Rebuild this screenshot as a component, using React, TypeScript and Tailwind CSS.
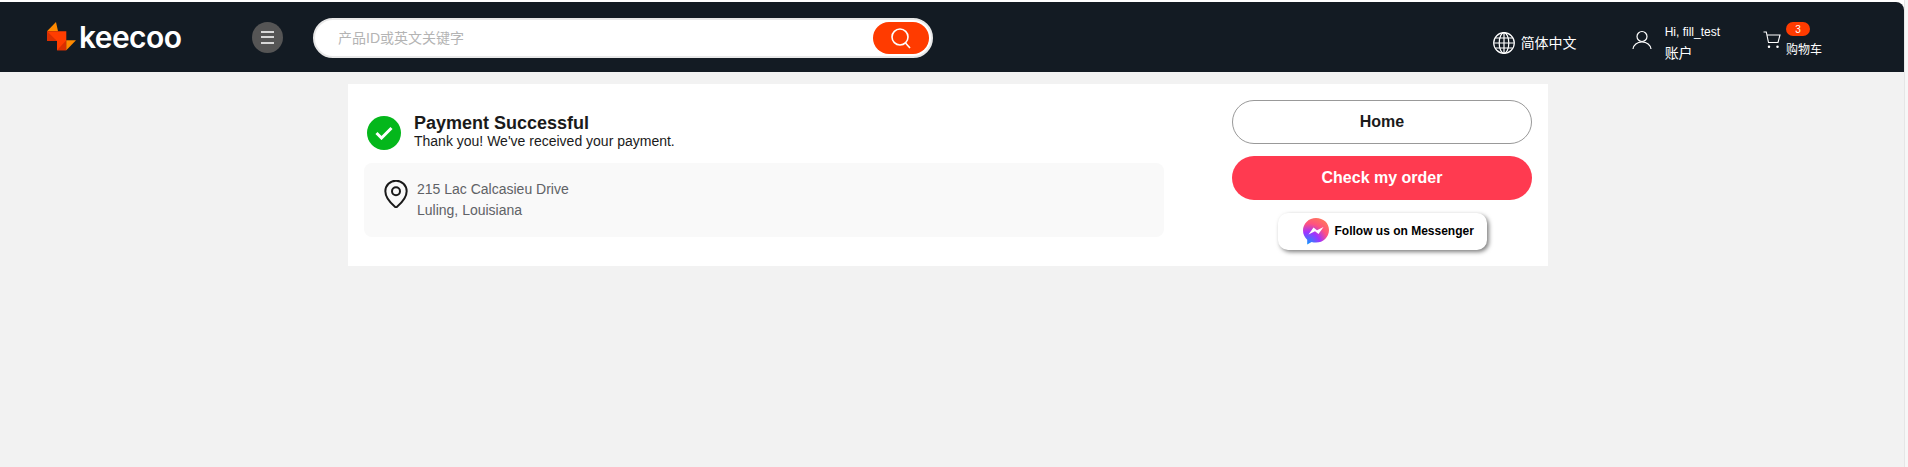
function Logo() {
  return (
    <div className="flex w-[135px] shrink-0 items-center">
      <svg width="30" height="30" viewBox="0 0 30 30" className="shrink-0">
        <polygon points="0,9.300 9,0 11,9.300" fill="#ff8a00" />
        <polygon points="0,9.300 19.300,9.300 19.300,28.300 10,28.300 10,19 0,19" fill="#ff3d00" />
        <polygon points="0,9.300 10,19 0,19" fill="#d92f00" />
        <polygon points="10,28.300 19.300,18.300 19.300,28.300" fill="#d92f00" />
        <polygon points="19.300,18.300 29,18.300 19.300,28.300" fill="#ff8a00" />
      </svg>
      <span className="ml-[2px] font-['Inter',sans-serif] text-[30px] font-semibold leading-none tracking-[-0.6px] text-white">
        keecoo
      </span>
    </div>
  );
}

function SearchIcon() {
  return (
    <svg width="22" height="22" viewBox="0 0 22 22" fill="none" stroke="#ffffff" strokeWidth="1.6">
      <circle cx="10" cy="10" r="8" />
      <path d="M15.500 16l4.500 5" />
    </svg>
  );
}

function SearchBar() {
  return (
    <div className="ml-[30px] mt-[2px] flex h-[40px] w-[620px] items-center justify-between rounded-full border-2 border-[#e8e8e8] bg-white pl-[23px] pr-[2px]">
      <span className="text-[14px] text-[#b4b4b4]">产品ID或英文关键字</span>
      <button className="flex h-[32px] w-[56px] items-center justify-center rounded-full bg-[#ff3b00]">
        <SearchIcon />
      </button>
    </div>
  );
}

function GlobeIcon() {
  return (
    <svg width="26" height="26" viewBox="0 0 26 26" fill="none" stroke="#ffffff" strokeWidth="1.2" className="shrink-0">
      <circle cx="13" cy="13" r="10.300" />
      <ellipse cx="13" cy="13" rx="4.800" ry="10.300" />
      <path d="M13 2.700v20.600M2.700 13h20.600M4.300 8h17.400M4.300 18h17.400" />
    </svg>
  );
}

function UserIcon() {
  return (
    <svg width="20" height="20" viewBox="0 0 20 20" fill="none" stroke="#ffffff" strokeWidth="1.2" className="mb-[6px] shrink-0">
      <circle cx="10" cy="6.500" r="5" />
      <path d="M1 19c.5-4 4-7 9-7s8.500 3 9 7" />
    </svg>
  );
}

function CartIcon() {
  return (
    <svg width="18" height="18" viewBox="0 0 18 18" fill="none" stroke="#ffffff" strokeWidth="1.100" className="mt-[9px] shrink-0">
      <path d="M0.500 1h2.800l2.200 10.500h9.500l2-7.500H4" />
      <circle cx="6" cy="15.800" r="0.700" fill="#ffffff" />
      <circle cx="14.500" cy="15.800" r="0.700" fill="#ffffff" />
    </svg>
  );
}

function Header() {
  return (
    <div className="bg-white pt-[2px]">
      <header className="flex h-[70px] items-center rounded-tr-[8px] bg-[#131b23] pl-[47px] text-white">
        <Logo />
        <button className="ml-[70px] flex h-[31px] w-[31px] flex-col items-center justify-center gap-[3.500px] rounded-full bg-[#555555]">
          <span className="h-[2px] w-[13px] bg-[#d8d8d8]" />
          <span className="h-[2px] w-[13px] bg-[#d8d8d8]" />
          <span className="h-[2px] w-[13px] bg-[#d8d8d8]" />
        </button>
        <SearchBar />

        <div className="ml-auto flex h-full items-start pr-[82px]">
          <div className="mt-[28px] flex items-center">
            <GlobeIcon />
            <span className="ml-[4px] text-[14px] leading-[26px]">简体中文</span>
          </div>

          <div className="ml-[55px] mt-[20px] flex items-center">
            <UserIcon />
            <div className="ml-[13px] leading-[21px]">
              <div className="text-[12px]">Hi, fill_test</div>
              <div className="text-[14px]">账户</div>
            </div>
          </div>

          <div className="ml-[43px] mt-[20px] flex items-start">
            <CartIcon />
            <div className="ml-[5px]">
              <div className="flex h-[14px] w-[24px] items-center justify-center rounded-full bg-[#ff3b00] text-[10px]">
                3
              </div>
              <div className="mt-[4px] text-[12px] leading-[20px]">购物车</div>
            </div>
          </div>
        </div>
      </header>
    </div>
  );
}

function MessengerIcon() {
  return (
    <svg width="26" height="27" viewBox="0 0 26 27" className="shrink-0">
      <defs>
        <radialGradient id="msg" cx="0.2" cy="1" r="1.05">
          <stop offset="0" stopColor="#0a99ff" />
          <stop offset="0.45" stopColor="#a033ff" />
          <stop offset="0.75" stopColor="#ff5280" />
          <stop offset="1" stopColor="#ff7061" />
        </radialGradient>
      </defs>
      <path
        d="M13 0C5.800 0 0 5.500 0 12.600c0 3.700 1.600 6.900 4.200 9.100v4.800l4.400-2.500c1.400.4 2.900.6 4.400.6 7.200 0 13-5.500 13-12.600S20.200 0 13 0z"
        fill="url(#msg)"
      />
      <path d="M5.500 16.500L10.500 9.500 14 12.300 20.500 9 15.500 16 12 13.200z" fill="#ffffff" />
    </svg>
  );
}

function PinIcon() {
  return (
    <svg width="24" height="28" viewBox="3 1.500 18 21" fill="none" stroke="#1a1a1a" strokeWidth="1.500" className="mt-[1px] shrink-0">
      <path d="M20 10c0 5-5.500 10.200-7.400 11.800a1 1 0 0 1-1.200 0C9.500 20.200 4 15 4 10a8 8 0 0 1 16 0z" />
      <circle cx="12" cy="10" r="3" />
    </svg>
  );
}

function CheckIcon() {
  return (
    <svg width="18" height="14" viewBox="0 0 18 14" fill="none" stroke="#ffffff" strokeWidth="3">
      <path d="M1.500 7l5 5L16.500 2" />
    </svg>
  );
}

export default function App() {
  return (
    <div className="flex h-[467px] overflow-hidden bg-[#f2f2f2] font-['Liberation_Sans','Noto_Sans_CJK_SC',sans-serif]">
      <div className="w-[1904px] shrink-0">
        <Header />

        <main className="ml-[348px] mt-[12px] flex h-[182px] w-[1200px] items-start justify-between bg-white px-[16px]">
          <section className="w-[800px]">
            <div className="mt-[30px] flex items-center pl-[3px]">
              <div className="flex h-[34px] w-[34px] items-center justify-center rounded-full bg-[#04b71b]">
                <CheckIcon />
              </div>
              <div className="ml-[13px] pb-[2px]">
                <h1 className="text-[18px] font-bold leading-[19px] text-[#1a1a1a]">Payment Successful</h1>
                <p className="text-[14px] leading-[17px] text-[#1a1a1a]">
                  Thank you! We've received your payment.
                </p>
              </div>
            </div>

            <div className="mt-[11px] flex h-[74px] items-start rounded-[8px] bg-[#f9f9f9] pl-[20px] pt-[16px]">
              <PinIcon />
              <div className="ml-[9px] text-[14px] leading-[21px] text-[#606266]">
                <div>215 Lac Calcasieu Drive</div>
                <div>Luling, Louisiana</div>
              </div>
            </div>
          </section>

          <section className="mt-[16px] flex w-[300px] flex-col items-center">
            <button className="h-[44px] w-full rounded-full border border-[#999999] text-[16px] font-bold text-[#1a1a1a]">
              Home
            </button>
            <button className="mt-[12px] h-[44px] w-full rounded-full bg-[#ff3a50] text-[16px] font-bold text-white">
              Check my order
            </button>
            <div className="mt-[13px] flex h-[37px] w-[209px] items-center rounded-[10px] bg-white pl-[25px] shadow-[2px_2px_4px_rgba(0,0,0,0.5)]">
              <MessengerIcon />
              <span className="ml-[6px] pb-[2px] text-[12px] font-bold text-black">Follow us on Messenger</span>
            </div>
          </section>
        </main>
      </div>

      {/* scrollbar edge */}
      <div className="flex-1 border-l border-[#e6e6e6] bg-[#f7f7f7]" />
    </div>
  );
}
